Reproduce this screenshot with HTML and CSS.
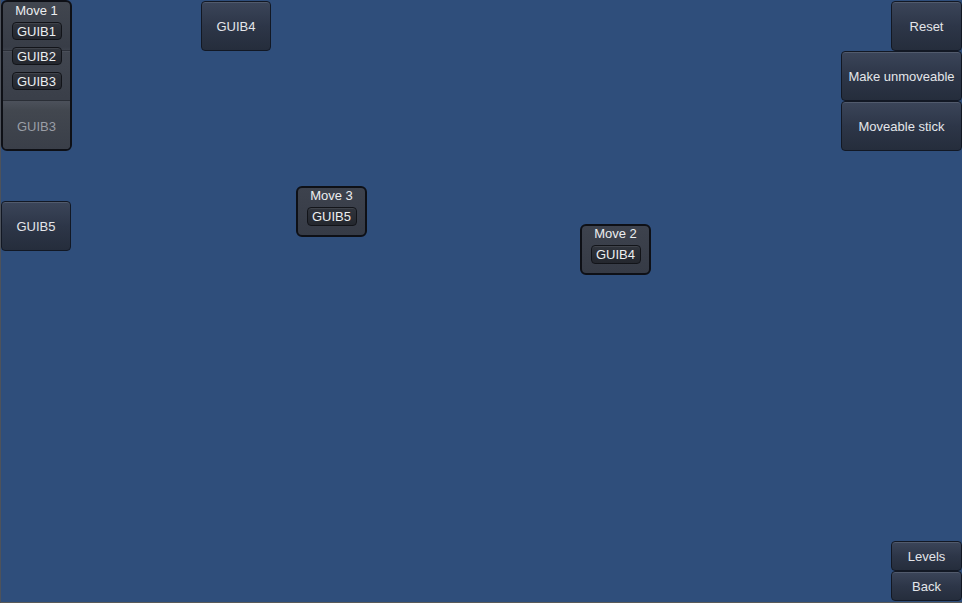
FILE: index.html
```html
<!DOCTYPE html>
<html>
<head>
<meta charset="utf-8">
<link rel="stylesheet" href="styles.css">
</head>
<body>
<div class="canvas">
  <div class="window win-move1">
    <div class="win-title">Move 1</div>
    <div class="mini">GUIB1</div>
    <div class="mini">GUIB2</div>
    <div class="mini mini-last">GUIB3</div>
    <div class="slab">GUIB3</div>
  </div>

  <div class="btn btn-guib4">GUIB4</div>
  <div class="btn btn-guib5">GUIB5</div>

  <div class="window win-small win-move3">
    <div class="win-title">Move 3</div>
    <div class="mini">GUIB5</div>
  </div>

  <div class="window win-small win-move2">
    <div class="win-title">Move 2</div>
    <div class="mini">GUIB4</div>
  </div>

  <div class="top-right">
    <div class="btn btn-reset">Reset</div>
    <div class="btn btn-wide">Make unmoveable</div>
    <div class="btn btn-wide">Moveable stick</div>
  </div>

  <div class="bottom-right">
    <div class="btn btn-short">Levels</div>
    <div class="btn btn-short">Back</div>
  </div>
</div>
</body>
</html>
```

FILE: styles.css
```css
html, body {
  margin: 0;
  padding: 0;
}
body {
  width: 962px;
  height: 603px;
  overflow: hidden;
  font-family: "Liberation Sans", Arial, sans-serif;
  font-size: 13px;
}
.canvas {
  position: relative;
  width: 962px;
  height: 603px;
  box-sizing: border-box;
  background: #2f4e7b;
  box-shadow: inset 1px 0 0 #4d525b, inset 0 -1px 0 #5a5a58;
}

.btn {
  box-sizing: border-box;
  display: flex;
  align-items: center;
  justify-content: center;
  color: #e4e6ea;
  background: linear-gradient(#3b4559, #2d3648 50%, #252d3c);
  border: 1px solid #121824;
  border-radius: 4px;
  box-shadow: inset 0 1px 0 rgba(255,255,255,0.12);
  white-space: nowrap;
}

.btn-guib4 {
  position: absolute;
  left: 201px;
  top: 1px;
  width: 70px;
  height: 50px;
}
.btn-guib5 {
  position: absolute;
  left: 1px;
  top: 201px;
  width: 70px;
  height: 50px;
}

.top-right {
  position: absolute;
  right: 0;
  top: 1px;
  display: flex;
  flex-direction: column;
  align-items: flex-end;
}
.btn-reset {
  width: 71px;
  height: 50px;
}
.btn-wide {
  width: 121px;
  height: 50px;
}

.bottom-right {
  position: absolute;
  right: 0;
  top: 541px;
  display: flex;
  flex-direction: column;
}
.btn-short {
  width: 71px;
  height: 30px;
}

.window {
  position: absolute;
  box-sizing: border-box;
  border: 2px solid #0e1016;
  border-radius: 6px;
  background: linear-gradient(#3d424d, #363b46);
  display: flex;
  flex-direction: column;
  align-items: center;
  color: #eceef0;
}
.win-title {
  flex-shrink: 0;
  height: 15px;
  line-height: 15px;
  text-align: center;
}
.mini {
  flex-shrink: 0;
  box-sizing: border-box;
  width: 50px;
  height: 18px;
  display: flex;
  align-items: center;
  justify-content: center;
  background: linear-gradient(#30343c, #24272e);
  border: 1px solid #121419;
  border-radius: 4px;
  box-shadow: inset 0 1px 0 rgba(255,255,255,0.08);
  color: #eceef0;
}

.win-move1 {
  left: 1px;
  top: 0;
  width: 71px;
  height: 151px;
  background:
    linear-gradient(to bottom, transparent 48px, #2b2f38 48px, #2b2f38 49px, #4a4f59 49px, #4a4f59 50px, transparent 50px),
    linear-gradient(#41464f, #383d47 45px, #414650 50px, #3a3f49 96px);
}
.win-move1 .win-title {
  padding-top: 1px;
  margin-bottom: 4px;
}
.win-move1 .mini {
  margin-bottom: 7px;
}
.win-move1 .mini-last {
  margin-bottom: 10px;
}
.slab {
  box-sizing: border-box;
  width: 100%;
  flex: 1;
  display: flex;
  align-items: center;
  justify-content: center;
  padding-top: 2px;
  color: #9a9ea6;
  background: linear-gradient(#4c515b, #42474f 20%, #3a3f49);
  border-top: 1px solid #2a2e36;
  border-radius: 0 0 4px 4px;
}

.win-small {
  width: 71px;
  height: 51px;
}
.win-small .win-title {
  margin-bottom: 4px;
}
.win-small .mini {
  height: 19px;
}
.win-move3 {
  left: 296px;
  top: 186px;
}
.win-move2 {
  left: 580px;
  top: 224px;
}
```
